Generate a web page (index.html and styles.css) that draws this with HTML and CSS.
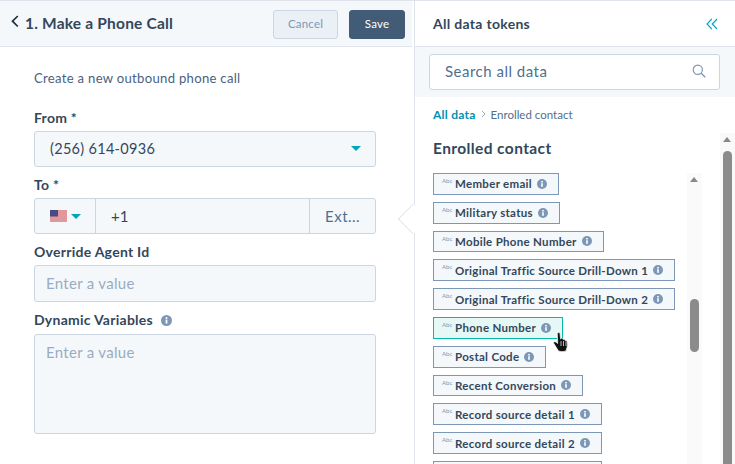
FILE: index.html
```html
<!DOCTYPE html>
<html lang="en">
<head>
<meta charset="utf-8">
<title>Make a Phone Call</title>
<link rel="stylesheet" href="styles.css">
</head>
<body>
<svg class="defs" width="0" height="0" aria-hidden="true">
  <symbol id="info" viewBox="0 0 10 10">
    <circle cx="5" cy="5" r="5" fill="#7c98b6"/>
    <rect x="4.200" y="4.200" width="1.600" height="3.600" fill="#fff"/>
    <rect x="4.200" y="2" width="1.600" height="1.500" fill="#fff"/>
  </symbol>
</svg>
<main class="app">
  <section class="editor">
    <header class="editor-head">
      <svg class="back" width="8" height="13" viewBox="0 0 8 13"><path d="M6.800 1 1.500 6.200l5.300 5.300" fill="none" stroke="#1f2d3d" stroke-width="1.700"/></svg>
      <h1 class="editor-title">1. Make a Phone Call</h1>
      <button class="btn btn-cancel">Cancel</button>
      <button class="btn btn-save">Save</button>
    </header>
    <div class="form">
      <p class="intro">Create a new outbound phone call</p>
      <label class="label label-from">From *</label>
      <div class="field field-select">
        <span class="value">(256) 614-0936</span>
        <span class="caret caret-big"></span>
      </div>
      <label class="label label-to">To *</label>
      <div class="field field-phone">
        <div class="flag-cell">
          <svg class="flag" width="17" height="12" viewBox="0 0 17 12">
            <rect width="17" height="12" rx="1.500" fill="#f4eeee"/>
            <path d="M0 1h17M0 3h17M0 5h17M0 7h17M0 9h17M0 11h17" stroke="#d0414c" stroke-width="1"/>
            <rect width="8" height="6.500" fill="#4a4a86"/>
          </svg>
          <span class="caret"></span>
        </div>
        <div class="phone-cell">+1</div>
        <div class="ext-cell">Ext...</div>
      </div>
      <label class="label label-agent">Override Agent Id</label>
      <div class="field field-input"><span class="placeholder">Enter a value</span></div>
      <label class="label label-dyn">Dynamic Variables <svg class="info info-label"><use href="#info"/></svg></label>
      <div class="field field-area"><span class="placeholder">Enter a value</span></div>
    </div>
    <span class="pointer"></span>
  </section>
  <aside class="tokens">
    <header class="tokens-head">
      <h2 class="tokens-title">All data tokens</h2>
      <svg class="collapse" width="12" height="12" viewBox="0 0 12 12"><path d="M5.800 1 1 6l4.800 5M11 1 6.200 6l4.800 5" fill="none" stroke="#00a4bd" stroke-width="1.100"/></svg>
    </header>
    <div class="search-band">
      <div class="search">
        <span class="search-text">Search all data</span>
        <svg width="14" height="14" viewBox="0 0 14 14"><circle cx="5.800" cy="5.800" r="4.600" fill="none" stroke="#7c98b6" stroke-width="1.200"/><path d="m9.200 9.200 4 4" stroke="#7c98b6" stroke-width="1.300"/></svg>
      </div>
    </div>
    <div class="tokens-body">
      <div class="tokens-main">
        <nav class="crumbs"><a class="crumb-link">All data</a><svg class="crumb-sep" width="5" height="8" viewBox="0 0 5 8"><path d="m1 1 3 3-3 3" fill="none" stroke="#7c98b6" stroke-width=".8"/></svg><span class="crumb-here">Enrolled contact</span></nav>
        <h3 class="group-title">Enrolled contact</h3>
        <div class="list-wrap">
          <ul class="token-list">
            <li class="token"><span class="abc">Abc</span><span class="token-name">Member email</span><svg class="info"><use href="#info"/></svg></li>
            <li class="token"><span class="abc">Abc</span><span class="token-name">Military status</span><svg class="info"><use href="#info"/></svg></li>
            <li class="token"><span class="abc">Abc</span><span class="token-name">Mobile Phone Number</span><svg class="info"><use href="#info"/></svg></li>
            <li class="token"><span class="abc">Abc</span><span class="token-name">Original Traffic Source Drill-Down 1</span><svg class="info"><use href="#info"/></svg></li>
            <li class="token"><span class="abc">Abc</span><span class="token-name">Original Traffic Source Drill-Down 2</span><svg class="info"><use href="#info"/></svg></li>
            <li class="token token-hover"><span class="abc">Abc</span><span class="token-name">Phone Number</span><svg class="info"><use href="#info"/></svg>
              <svg class="cursor" width="20" height="22" viewBox="0 0 20 22"><path d="M6 1.800c.9-.6 1.800-.2 2 .8l.6 5.400.6-.5c.6-.6 1.500-.4 1.800.4l.2.700c.6-.5 1.500-.3 1.800.5l.2.600c.7-.4 1.500-.1 1.800.6.600 2 .600 4.600-.1 6.600l-.9 3c-2.600 1-5.500 1-7.700-.1L2 12.800c-.7-.9-.4-2 .6-2.100 1-.1 1.800.6 3.100 1.800L5.300 3.100c0-.5.300-1 .7-1.300Z" fill="#111" stroke="#eee" stroke-width=".8"/><path d="M9 10v5M11.500 10v5M14 10.500V15" stroke="#fff" stroke-width=".7"/></svg>
            </li>
            <li class="token"><span class="abc">Abc</span><span class="token-name">Postal Code</span><svg class="info"><use href="#info"/></svg></li>
            <li class="token"><span class="abc">Abc</span><span class="token-name">Recent Conversion</span><svg class="info"><use href="#info"/></svg></li>
            <li class="token"><span class="abc">Abc</span><span class="token-name">Record source detail 1</span><svg class="info"><use href="#info"/></svg></li>
            <li class="token"><span class="abc">Abc</span><span class="token-name">Record source detail 2</span><svg class="info"><use href="#info"/></svg></li>
            <li class="token token-cut"></li>
          </ul>
          <div class="scrollbar scrollbar-inner"><span class="arrow"></span><span class="thumb"></span></div>
        </div>
      </div>
      <div class="scrollbar scrollbar-outer"><span class="arrow"></span><span class="thumb"></span></div>
    </div>
  </aside>
</main>
</body>
</html>
```

FILE: styles.css
```css
* { box-sizing: border-box; }
html, body { margin: 0; height: 100%; overflow: hidden; background: #fff; }
body { font-family: "Lato", "Noto Sans", sans-serif; color: #33475b; }
.defs { position: absolute; }
h1, h2, h3, p, ul { margin: 0; padding: 0; }
.app { display: flex; height: 464px; border-top: 1px solid #dfe3eb; }

.editor { position: relative; width: 415px; flex: none; border-right: 1px solid #dfe3eb; }
.editor-head { height: 46px; padding: 9px 7px 0 11px; margin-right: 2px; display: flex; align-items: flex-start; background: #f5f8fa; border-bottom: 1px solid #dfe3eb; }
.back { margin-top: 5px; }
.editor-title { margin: 4px 0 0 6px; font-size: 15.500px; line-height: 18px; font-weight: 700; color: #33475b; letter-spacing: .2px; flex: 1; }
.btn { height: 29px; border-radius: 3px; font: 400 11.500px "Lato", sans-serif; letter-spacing: .2px; padding: 0 0 2px; margin-left: 11px; }
.btn-cancel { width: 65px; background: #eaf0f6; border: 1px solid #cbd6e2; color: #7c98b6; }
.btn-save { width: 56px; background: #425b76; border: 1px solid #425b76; color: #fff; }

.form { padding: 22px 38px 0 34px; }
.intro { font-size: 13.100px; line-height: 18px; color: #4a6180; letter-spacing: .3px; }
.label { display: block; font-size: 14px; line-height: 16px; font-weight: 700; color: #33475b; letter-spacing: .26px; }
.label-from { margin-top: 23px; }
.label-to { margin-top: 10px; }
.label-agent { margin-top: 10px; }
.label-dyn { margin-top: 10px; display: flex; align-items: center; gap: 8px; }
.field { margin-top: 5px; background: #f5f8fa; border: 1px solid #cbd6e2; border-radius: 3px; width: 342px; font-size: 15px; }
.field-select { height: 36px; display: flex; align-items: center; justify-content: space-between; padding: 0 14px 2px 15px; font-size: 14.500px; letter-spacing: .3px; }
.value { color: #33475b; }
.caret { width: 0; height: 0; border-left: 5px solid transparent; border-right: 5px solid transparent; border-top: 5px solid #00a4bd; }
.field-phone { height: 36px; display: flex; }
.flag-cell { width: 61px; display: flex; align-items: center; gap: 4px; padding-left: 15px; border-right: 1px solid #cbd6e2; }
.phone-cell { flex: 1; display: flex; align-items: center; padding-left: 15px; }
.ext-cell { width: 66px; display: flex; align-items: center; padding-left: 15px; border-left: 1px solid #cbd6e2; color: #516f90; letter-spacing: .5px; }
.field-input { height: 37px; display: flex; align-items: center; padding: 0 11px 2px; }
.field-area { height: 100px; margin-top: 6px; padding: 8px 11px; }
.placeholder { color: #99acc2; letter-spacing: .3px; }

.pointer { position: absolute; left: 401px; top: 206px; width: 24px; height: 24px; background: #fff; border-left: 1px solid #dfe3eb; border-bottom: 1px solid #dfe3eb; transform: rotate(45deg) scale(.9); }

.tokens { flex: 1; min-width: 0; display: flex; flex-direction: column; }
.tokens-head { height: 46px; flex: none; padding: 0 17px 0 18px; display: flex; align-items: center; justify-content: space-between; border-bottom: 1px solid #dfe3eb; }
.tokens-title { font-size: 14px; font-weight: 700; color: #33475b; letter-spacing: .3px; }
.search-band { height: 50px; flex: none; background: #f5f8fa; padding: 7px 15px 0 14px; }
.search { height: 36px; display: flex; align-items: center; justify-content: space-between; padding: 0 13px 2px 15px; background: #fff; border: 1px solid #cbd6e2; border-radius: 3px; }
.search-text { font-size: 15px; color: #516f90; letter-spacing: .5px; }
.tokens-body { flex: 1; display: flex; min-height: 0; }
.tokens-main { flex: 1; min-width: 0; padding: 9px 0 0 18px; display: flex; flex-direction: column; min-height: 0; }
.crumbs { display: flex; align-items: center; height: 16px; font-size: 12px; }
.crumb-link { color: #0091ae; font-weight: 700; letter-spacing: .25px; }
.crumb-sep { margin: 0 5px; }
.crumb-here { color: #516f90; font-size: 11.500px; letter-spacing: 0; }
.group-title { margin-top: 17px; font-size: 15.500px; line-height: 19px; font-weight: 700; color: #33475b; letter-spacing: .4px; }
.list-wrap { display: flex; margin-top: 15px; flex: 1; min-height: 0; overflow: hidden; }
.token-list { flex: 1; min-width: 0; list-style: none; display: flex; flex-direction: column; align-items: flex-start; gap: 7px; }
.token { position: relative; flex: none; height: 21.800px; display: flex; align-items: center; padding: 0 11px 0 8px; background: #f5f8fa; border: 1px solid #7c98b6; font-size: 11.500px; font-weight: 700; color: #33475b; letter-spacing: .3px; }
.token-cut { width: 169px; }
.abc { width: 13px; font-size: 6px; font-weight: 400; color: #7c98b6; letter-spacing: 0; align-self: flex-start; margin-top: 3px; }
.token-name { white-space: nowrap; }
.info { display: block; width: 10px; height: 10px; margin-left: 5px; flex: none; }
.info-label { width: 11px; height: 11px; margin-left: 0; }
.token-hover { background: #e5f8f6; border-color: #00bda5; }
.cursor { position: absolute; right: -10px; top: 13px; }
.scrollbar { position: relative; flex: none; width: 15px; background: #fafafa; }
.scrollbar-inner { margin-right: 18px; }
.scrollbar-outer { background: #f9f9f9; margin-top: 36px; }
.arrow { position: absolute; left: 3px; top: 4px; width: 0; height: 0; border-left: 4.500px solid transparent; border-right: 4.500px solid transparent; border-bottom: 5px solid #888; }
.thumb { position: absolute; left: 3px; width: 9px; background: #8b8b8b; border-radius: 5px; }
.scrollbar-inner .thumb { top: 126px; height: 53px; }
.scrollbar-outer .thumb { top: 18px; height: 400px; }
```
